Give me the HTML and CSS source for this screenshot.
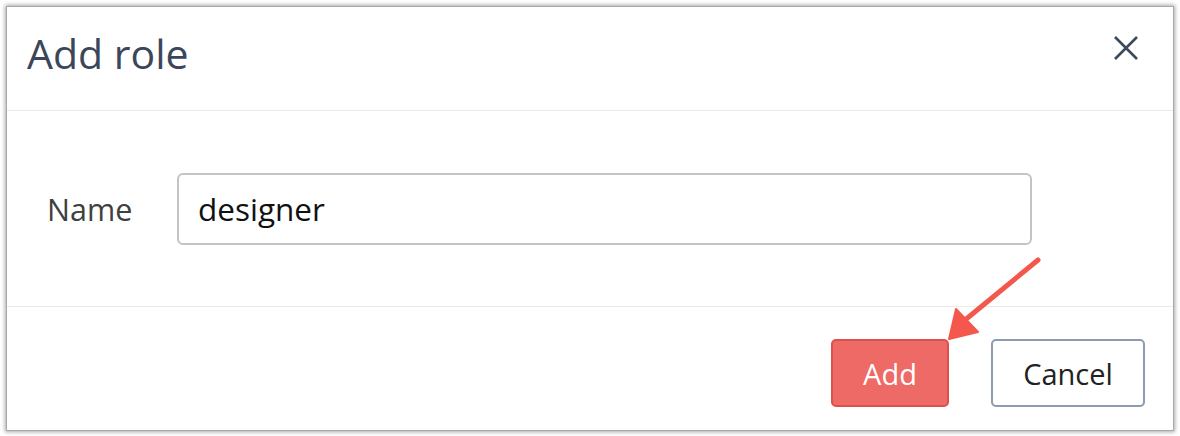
FILE: index.html
```html
<!DOCTYPE html>
<html>
<head>
<meta charset="utf-8">
<link rel="stylesheet" href="styles.css">
</head>
<body>
<div class="dialog">
  <div class="header">
    <h1 class="title">Add role</h1>
    <button class="close" aria-label="Close">
      <svg width="26" height="26" viewBox="0 0 26 26"><path d="M2 2L24 24M24 2L2 24" stroke="#3d4a5c" stroke-width="2.6" fill="none"/></svg>
    </button>
  </div>
  <div class="body">
    <label class="label">Name</label>
    <div class="input">designer</div>
  </div>
  <div class="footer">
    <button class="btn btn-add">Add</button>
    <button class="btn btn-cancel">Cancel</button>
  </div>
  <svg class="arrow" width="120" height="100" viewBox="0 0 120 100">
    <line x1="107" y1="10" x2="34" y2="70" stroke="#f4574b" stroke-width="5" stroke-linecap="round"/>
    <path d="M18 89 L25 59 L47 82 Z" fill="#f4574b" stroke="#f4574b" stroke-width="2" stroke-linejoin="round"/>
  </svg>
</div>
</body>
</html>
```
FILE: styles.css
```css
* { box-sizing: border-box; }
html, body { margin: 0; padding: 0; background: #fff; }
body {
  padding: 7px 7px 6px 7px;
  font-family: "Open Sans", "Noto Sans", sans-serif;
}
.dialog {
  position: relative;
  width: 1166px;
  height: 423px;
  background: #fff;
  box-shadow: 0 0 0 1px #a9a9a9, 0 0 4px 2px rgba(0,0,0,0.35);
  display: flex;
  flex-direction: column;
}
.header {
  height: 104px;
  border-bottom: 1px solid #ebebeb;
  display: flex;
  align-items: flex-start;
  justify-content: space-between;
  padding: 0 34px 0 20px;
}
.title {
  margin: 0;
  margin-top: 19px;
  font-size: 41px;
  font-weight: 400;
  color: #3b4759;
  line-height: 54px;
}
.close {
  margin-top: 28px;
  background: none;
  border: 0;
  padding: 0;
  width: 26px;
  height: 26px;
  cursor: pointer;
}
.close svg { display: block; }
.body {
  height: 196px;
  border-bottom: 1px solid #ebebeb;
  display: flex;
  align-items: center;
  padding: 0 0 0 40px;
}
.label {
  font-size: 30.5px;
  color: #404040;
  width: 130px;
}
.input {
  width: 855px;
  height: 72px;
  border: 2px solid #c4c4c4;
  border-radius: 6px;
  padding: 0 19px;
  display: flex;
  align-items: center;
  font-size: 31.5px;
  color: #111;
}
.footer {
  flex: 1;
  display: flex;
  justify-content: flex-end;
  align-items: flex-start;
  padding: 32px 28px 0 0;
  gap: 42px;
}
.btn {
  height: 68px;
  border-radius: 5px;
  font-family: "Open Sans", "Noto Sans", sans-serif;
  font-size: 29px;
  cursor: pointer;
}
.btn-add {
  width: 118px;
  background: #ee6a66;
  border: 2px solid #dd504b;
  color: #fff;
}
.btn-cancel {
  width: 154px;
  background: #fff;
  border: 2px solid #8c9bb0;
  color: #222;
}
.arrow {
  position: absolute;
  left: 924px;
  top: 243px;
}
```
